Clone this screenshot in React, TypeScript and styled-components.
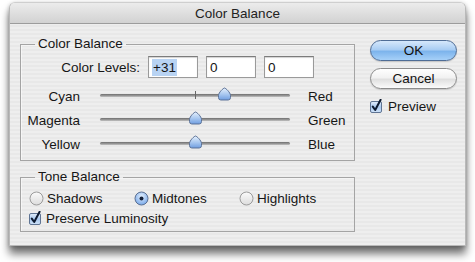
import React from 'react'
import styled, { createGlobalStyle } from 'styled-components'

const GlobalStyle = createGlobalStyle`
  html, body {
    margin: 0;
    padding: 0;
    background: #ffffff;
  }
  body {
    font-family: "Liberation Sans", Arial, sans-serif;
    font-size: 13px;
    color: #161616;
  }
`

const Page = styled.div`
  width: 475px;
  height: 262px;
  overflow: hidden;
  padding: 2px 0 0 9px;
  box-sizing: border-box;
`

const Window = styled.div`
  width: 457px;
  height: 244px;
  display: flex;
  flex-direction: column;
  border-radius: 6px 6px 0 0;
  border: 1px solid #b9b9b9;
  border-top-color: #cfcfcf;
  box-sizing: border-box;
  box-shadow: 0 8px 9px rgba(0, 0, 0, 0.55), 0 1px 4px rgba(0, 0, 0, 0.25);
  overflow: hidden;
  background: repeating-linear-gradient(
    to bottom,
    #eeeeee 0px,
    #eeeeee 2px,
    #e8e8e8 2px,
    #e8e8e8 4px
  );
`

const TitleBar = styled.div`
  height: 20px;
  flex: none;
  display: flex;
  align-items: center;
  justify-content: center;
  background: linear-gradient(to bottom, #ececec, #dcdcdc 60%, #d2d2d2);
  border-bottom: 1px solid #9c9c9c;
  font-size: 13.5px;
  color: #222;
`

const Body = styled.div`
  flex: 1;
  display: flex;
  align-items: flex-start;
  padding: 12px 0 0 10px;
  gap: 15px;
`

const LeftColumn = styled.div`
  display: flex;
  flex-direction: column;
  gap: 8px;
`

const Group = styled.fieldset`
  width: 335px;
  margin: 0;
  padding: 0;
  box-sizing: border-box;
  border: 1px solid #a4a4a4;
  box-shadow: inset 1px 1px 0 rgba(255, 255, 255, 0.5);
`

const Legend = styled.legend`
  margin-left: 14px;
  padding: 0 3px;
  line-height: 16px;
  font-size: 13.5px;
`

const GroupBody = styled.div<{ $top: number; $bottom: number }>`
  display: flex;
  flex-direction: column;
  padding: ${(p) => p.$top}px 0 ${(p) => p.$bottom}px 0;
  font-size: 13.5px;
`

const LevelsRow = styled.div`
  display: flex;
  align-items: center;
  height: 22px;
  gap: 8px;
  margin-bottom: 6px;
`

const LevelsLabel = styled.span`
  width: 119px;
  text-align: right;
`

const Field = styled.div`
  width: 50px;
  height: 22px;
  box-sizing: border-box;
  background: #fff;
  border: 1px solid #9a9a9a;
  border-top-color: #7c7c7c;
  box-shadow: inset 0 1px 1px rgba(0, 0, 0, 0.18);
  padding: 0 0 0 3px;
  display: flex;
  align-items: center;
`

const Selected = styled.span`
  background: #b8d3f3;
  padding: 1px 1px;
`

const SliderRow = styled.div`
  display: flex;
  align-items: center;
  height: 24px;
`

const SideLabel = styled.span<{ $align: 'left' | 'right' }>`
  width: ${(p) => (p.$align === 'right' ? '59px' : 'auto')};
  text-align: ${(p) => p.$align};
`

const TrackArea = styled.div`
  position: relative;
  flex: none;
  height: 24px;
  margin: 0 18px 0 20px;
  width: 190px;
  &::before {
    content: '';
    position: absolute;
    left: 0;
    right: 0;
    top: 10px;
    height: 3px;
    border-radius: 2px;
    background: linear-gradient(to bottom, #6e6e6e, #9a9a9a 60%, #c4c4c4);
  }
`

const Tick = styled.div`
  position: absolute;
  top: 7px;
  width: 1px;
  height: 8px;
  background: #666;
`

const Thumb = styled.svg`
  position: absolute;
  top: 3px;
  width: 13px;
  height: 14px;
  margin-left: -6px;
`

const OptionRow = styled.div`
  display: flex;
  align-items: center;
  height: 20px;
  padding-left: 8px;
`

const Option = styled.label<{ $width?: number }>`
  display: flex;
  align-items: center;
  gap: 3px;
  width: ${(p) => (p.$width ? `${p.$width}px` : 'auto')};
`

const RightColumn = styled.div`
  display: flex;
  flex-direction: column;
  padding-top: 4px;
  width: 87px;
  font-size: 13.5px;
`

const PushButton = styled.div<{ $primary?: boolean }>`
  height: 21px;
  box-sizing: border-box;
  border-radius: 11px;
  display: flex;
  align-items: center;
  justify-content: center;
  color: #111;
  border: 1px solid ${(p) => (p.$primary ? '#4f6d96' : '#8c8c8c')};
  background: ${(p) =>
    p.$primary
      ? 'linear-gradient(to bottom, #d6e8fb 0%, #a9cdf3 45%, #7db4ec 55%, #a6d0f8 100%)'
      : 'linear-gradient(to bottom, #ffffff 0%, #f2f2f2 45%, #e0e0e0 55%, #fbfbfb 100%)'};
  box-shadow: 0 1px 1px rgba(0, 0, 0, 0.15);
  & + & {
    margin-top: 7px;
  }
`

const PreviewRow = styled.label`
  display: flex;
  align-items: center;
  gap: 4px;
  margin-top: 10px;
  height: 14px;
`

const levels = ['+31', '0', '0']

const sliders = [
  { left: 'Cyan', right: 'Red', value: 31, tick: true },
  { left: 'Magenta', right: 'Green', value: 0, tick: false },
  { left: 'Yellow', right: 'Blue', value: 0, tick: false },
]

const Checkbox: React.FC = () => (
  <svg width="14" height="14" viewBox="0 0 14 14">
    <defs>
      <linearGradient id="cb" x1="0" y1="0" x2="0" y2="1">
        <stop offset="0" stopColor="#e3eefb" />
        <stop offset="0.5" stopColor="#a9c9ef" />
        <stop offset="1" stopColor="#cfe2f8" />
      </linearGradient>
    </defs>
    <rect x="0.5" y="2.5" width="11" height="11" rx="1.5" fill="url(#cb)" stroke="#5f7493" />
    <path d="M2.8 7.6 L5.2 11 L10.6 0.8" fill="none" stroke="#0d1a30" strokeWidth="2" strokeLinecap="round" strokeLinejoin="round" />
  </svg>
)

const Radio: React.FC<{ checked?: boolean }> = ({ checked }) => (
  <svg width="15" height="15" viewBox="0 0 15 15">
    <defs>
      <radialGradient id="rOn" cx="0.5" cy="0.35" r="0.6">
        <stop offset="0" stopColor="#e4f0fd" />
        <stop offset="1" stopColor="#7fadea" />
      </radialGradient>
      <linearGradient id="rOff" x1="0" y1="0" x2="0" y2="1">
        <stop offset="0" stopColor="#fbfbfb" />
        <stop offset="1" stopColor="#dcdcdc" />
      </linearGradient>
    </defs>
    <circle cx="7.5" cy="7.5" r="6.5" fill={checked ? 'url(#rOn)' : 'url(#rOff)'} stroke={checked ? '#5a6f92' : '#9a9a9a'} />
    {checked && <circle cx="7.5" cy="7.5" r="2" fill="#14213a" />}
  </svg>
)

const SliderThumb: React.FC<{ left: number }> = ({ left }) => (
  <Thumb viewBox="0 0 13 14" style={{ left }}>
    <defs>
      <linearGradient id="th" x1="0" y1="0" x2="0" y2="1">
        <stop offset="0" stopColor="#e6f0fc" />
        <stop offset="0.55" stopColor="#a6c6ef" />
        <stop offset="1" stopColor="#6f9de0" />
      </linearGradient>
    </defs>
    <path
      d="M6.5 1 C7.6 1 12.5 5.6 12.5 8.4 L12.5 10.6 Q12.5 13 10.2 13 L2.8 13 Q0.5 13 0.5 10.6 L0.5 8.4 C0.5 5.6 5.4 1 6.5 1 Z"
      fill="url(#th)"
      stroke="#5b7196"
    />
  </Thumb>
)

const App: React.FC = () => {
  return (
    <>
      <GlobalStyle />
      <Page>
        <Window>
          <TitleBar>Color Balance</TitleBar>
          <Body>
            <LeftColumn>
              <Group>
                <Legend>Color Balance</Legend>
                <GroupBody $top={4} $bottom={4}>
                  <LevelsRow>
                    <LevelsLabel>Color Levels:</LevelsLabel>
                    {levels.map((v, i) => (
                      <Field key={i}>{i === 0 ? <Selected>{v}</Selected> : v}</Field>
                    ))}
                  </LevelsRow>
                  {sliders.map((s) => (
                    <SliderRow key={s.left}>
                      <SideLabel $align="right">{s.left}</SideLabel>
                      <TrackArea>
                        {s.tick && <Tick style={{ left: 95 }} />}
                        <SliderThumb left={Math.round(((s.value + 100) / 200) * 190)} />
                      </TrackArea>
                      <SideLabel $align="left">{s.right}</SideLabel>
                    </SliderRow>
                  ))}
                </GroupBody>
              </Group>
              <Group>
                <Legend>Tone Balance</Legend>
                <GroupBody $top={3} $bottom={3}>
                  <OptionRow>
                    <Option $width={105}>
                      <Radio />
                      Shadows
                    </Option>
                    <Option $width={105}>
                      <Radio checked />
                      Midtones
                    </Option>
                    <Option>
                      <Radio />
                      Highlights
                    </Option>
                  </OptionRow>
                  <OptionRow>
                    <Option>
                      <Checkbox />
                      Preserve Luminosity
                    </Option>
                  </OptionRow>
                </GroupBody>
              </Group>
            </LeftColumn>
            <RightColumn>
              <PushButton $primary>OK</PushButton>
              <PushButton>Cancel</PushButton>
              <PreviewRow>
                <Checkbox />
                Preview
              </PreviewRow>
            </RightColumn>
          </Body>
        </Window>
      </Page>
    </>
  )
}

export default App
